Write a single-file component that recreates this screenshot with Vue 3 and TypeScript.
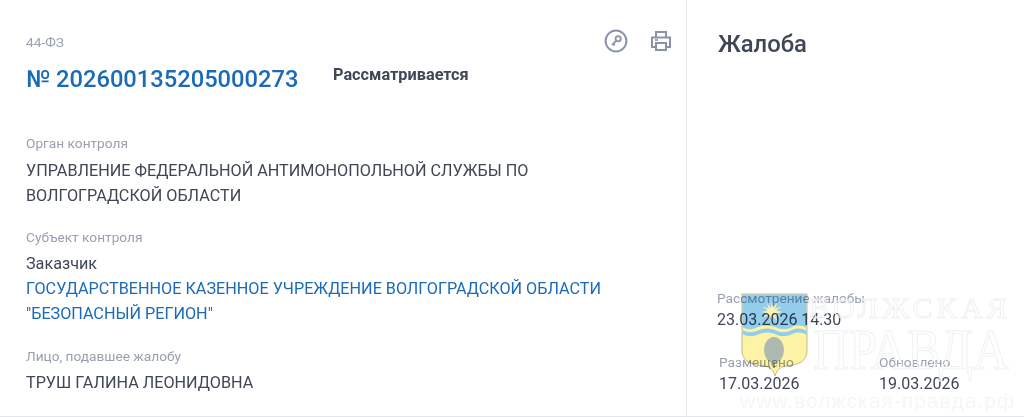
<script setup lang="ts">
const sections = [
  { label: 'Орган контроля', lines: ['УПРАВЛЕНИЕ ФЕДЕРАЛЬНОЙ АНТИМОНОПОЛЬНОЙ СЛУЖБЫ ПО', 'ВОЛГОГРАДСКОЙ ОБЛАСТИ'] },
]
const starPoints = Array.from({ length: 24 }, (_, i) => {
  const r = i % 2 === 0 ? 11 : 4.5
  const a = (i * Math.PI) / 12 - Math.PI / 2
  return `${(31 + r * Math.cos(a)).toFixed(1)},${(19 + r * Math.sin(a)).toFixed(1)}`
}).join(' ')
</script>

<template>
  <div class="page">
    <main class="left">
      <div class="head">
        <div class="law">44-ФЗ</div>
        <div class="icons">
          <svg width="24" height="24" viewBox="0 0 24 24" fill="none" stroke="#8a92a6" stroke-width="2">
            <circle cx="12" cy="12" r="10.4" />
            <circle cx="14.2" cy="9.8" r="2.6" stroke-width="1.8" />
            <path d="M12.3 11.7 L8 16 M9.2 14.8 L10.8 16.4" stroke-width="1.8" />
          </svg>
          <svg width="24" height="24" viewBox="0 0 24 24" fill="none" stroke="#8a92a6" stroke-width="2">
            <path d="M7 8V3h10v5" />
            <path d="M7 18H3V8.5h18V18h-4" />
            <path d="M7 14h10v7H7z" />
            <path d="M6 11h3" stroke-width="1.6" />
          </svg>
        </div>
      </div>
      <div class="title-row">
        <a class="number">№ 202600135205000273</a>
        <span class="status">Рассматривается</span>
      </div>
      <section v-for="s in sections" :key="s.label" class="block first">
        <div class="label">{{ s.label }}</div>
        <div v-for="l in s.lines" :key="l" class="value">{{ l }}</div>
      </section>
      <section class="block">
        <div class="label">Субъект контроля</div>
        <div class="value">Заказчик</div>
        <div class="value link">ГОСУДАРСТВЕННОЕ КАЗЕННОЕ УЧРЕЖДЕНИЕ ВОЛГОГРАДСКОЙ ОБЛАСТИ</div>
        <div class="value link">"БЕЗОПАСНЫЙ РЕГИОН"</div>
      </section>
      <section class="block">
        <div class="label">Лицо, подавшее жалобу</div>
        <div class="value">ТРУШ ГАЛИНА ЛЕОНИДОВНА</div>
      </section>
    </main>
    <aside class="right">
      <h2 class="side-title">Жалоба</h2>
      <div class="dates">
        <div class="label">Рассмотрение жалобы</div>
        <div class="value">23.03.2026 14:30</div>
        <div class="date-row">
          <div class="date-col">
            <div class="label">Размещено</div>
            <div class="value">17.03.2026</div>
          </div>
          <div class="date-col">
            <div class="label">Обновлено</div>
            <div class="value">19.03.2026</div>
          </div>
        </div>
      </div>
    </aside>
    <div class="watermark" aria-hidden="true">
      <div class="wm-text wm-line1">ВОЛЖСКАЯ</div>
      <div class="wm-text wm-line2">ПРАВДА</div>
      <div class="wm-url">www.волжская-правда.рф</div>
      <svg class="shield" width="68" height="84" viewBox="0 0 68 84">
        <path d="M1 1H66V58C66 68 58 72 44 73C39 74 36 77 34 83C32 77 29 74 24 73C10 72 1 68 1 58Z" fill="#fdf29b" stroke="#b9b17e" />
        <path d="M1.5 1.5H65.5V35C60 32 56 32 51 34C45 37 41 37 34 34C28 32 22 32 17 34C11 37 7 37 1.5 34Z" fill="#88c8ea" />
        <path d="M1.5 37C7 40 12 40 18 37C24 35 28 35 34 37C40 40 45 40 51 37C56 35 61 35 65.5 38V42C61 39 56 39 51 41C45 44 40 44 34 41C28 39 24 39 18 41C12 44 7 44 1.5 41Z" fill="#88c8ea" />
        <polygon :points="starPoints" fill="#f9f0a6" />
        <ellipse cx="33" cy="57" rx="10" ry="13" fill="#a5b3a6" />
        <path d="M33 69V75" stroke="#8d8f78" stroke-width="2" />
      </svg>
    </div>
  </div>
</template>

<style>
html, body { margin: 0; background: #fff; }
</style>

<style scoped>
.page {
  position: relative;
  display: flex;
  width: 1024px;
  height: 417px;
  box-sizing: border-box;
  border-bottom: 1px solid #e4e6ea;
  overflow: hidden;
  background: #fff;
  font-family: Roboto, "Liberation Sans", sans-serif;
  color: #3f4655;
}
.left {
  width: 687px;
  box-sizing: border-box;
  padding: 29px 13px 0 26px;
  border-right: 1px solid #e4e6ea;
}
.head { display: flex; justify-content: space-between; align-items: flex-start; }
.law { font-size: 13.7px; line-height: 26px; color: #99a0af; }
.icons { display: flex; gap: 21px; }
.title-row { display: flex; align-items: flex-start; margin-top: 9px; }
.number { font-size: 23.7px; line-height: 30px; font-weight: 500; color: #1b6ab8; width: 307px; }
.status { line-height: 20px; font-weight: 700; color: #3f4655; font-size: 16.3px; margin-top: 1px; }
.block { margin-top: 19.5px; }
.block:last-child { margin-top: 21.5px; }
.block.first { margin-top: 40px; }
.label { font-size: 13.7px; line-height: 18px; color: #99a0af; }
.value { font-size: 16.2px; line-height: 25px; color: #3f4655; }
.link { color: #1b6ab8; }
.block .label { margin-bottom: 5px; }
.block.first .label { margin-bottom: 6px; }
.right {
  flex: 1;
  display: flex;
  flex-direction: column;
  padding: 28px 31px 20px;
  min-width: 0;
}
.side-title { margin: 0; font-size: 23.8px; line-height: 32px; font-weight: 500; color: #3f4655; }
.dates { margin-top: auto; margin-left: -1px; }
.dates .value { font-size: 16px; }
.date-row { display: flex; margin-top: 21px; margin-left: 2px; }
.date-col { flex: none; width: 160px; }
.watermark {
  position: absolute;
  left: 741px;
  top: 293px;
  width: 283px;
  height: 124px;
  pointer-events: none;
}
.shield { position: absolute; left: 0; top: 0; mix-blend-mode: multiply; opacity: .9; }
.wm-text {
  position: absolute;
  font-family: "Liberation Serif", serif;
  color: transparent;
  -webkit-text-stroke: 1px #eff1f3;
  white-space: nowrap;
}
.wm-line1 { left: 68px; top: -4px; font-size: 30px; line-height: 38px; letter-spacing: 4.2px; }
.wm-line2 { left: 72px; top: 29px; font-size: 57px; line-height: 56px; transform: scaleX(.88); transform-origin: left; }
.wm-url {
  position: absolute;
  left: -1px;
  top: 98px;
  font-family: "Liberation Sans", sans-serif;
  font-size: 21px;
  line-height: 20px;
  letter-spacing: 1px;
  color: #f5f6f7;
  white-space: nowrap;
}
</style>
